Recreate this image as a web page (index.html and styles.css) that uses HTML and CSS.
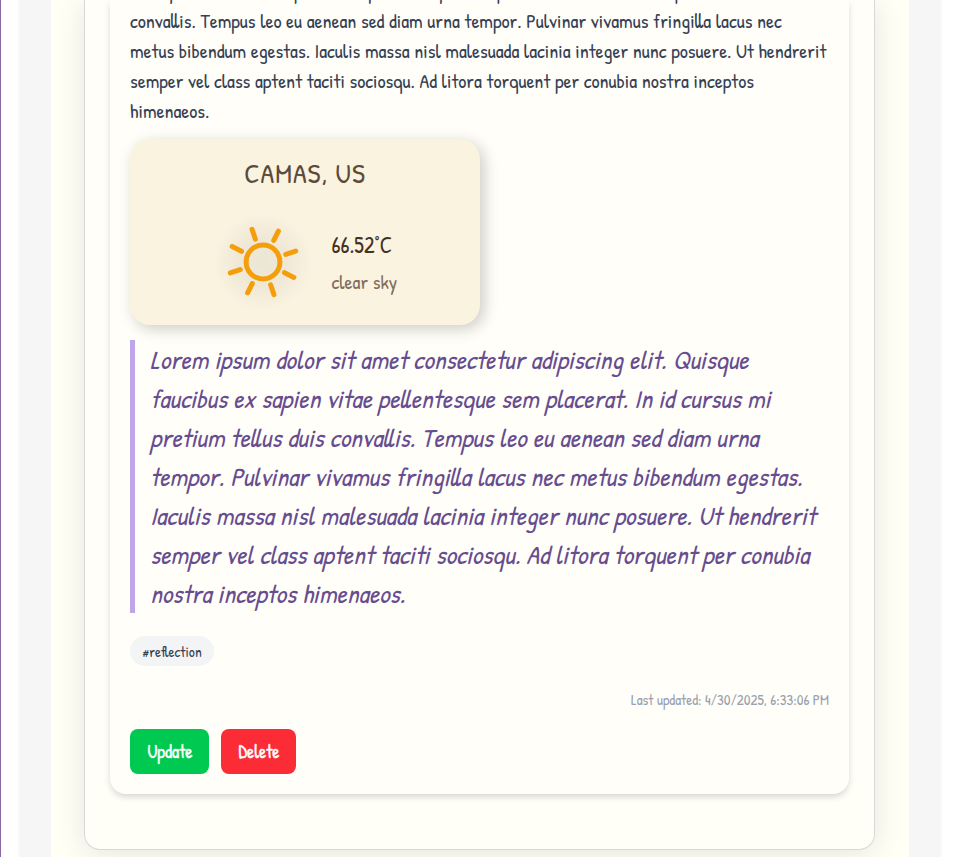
FILE: index.html
```html
<!DOCTYPE html>
<html lang="en">
<head>
<meta charset="utf-8">
<title>Journal</title>
<link rel="stylesheet" href="styles.css">
</head>
<body>
<div class="shell">
  <div class="page">
    <section class="panel">
      <article class="entry">
        <p class="body-text">
          <span class="line">Quisque faucibus ex sapien vitae pellentesque sem placerat. In id cursus mi pretium tellus duis</span>
          <span class="line">convallis. Tempus leo eu aenean sed diam urna tempor. Pulvinar vivamus fringilla lacus nec</span>
          <span class="line">metus bibendum egestas. Iaculis massa nisl malesuada lacinia integer nunc posuere. Ut hendrerit</span>
          <span class="line">semper vel class aptent taciti sociosqu. Ad litora torquent per conubia nostra inceptos</span>
          <span class="line">himenaeos.</span>
        </p>
        <div class="weather">
          <h2 class="city">CAMAS, US</h2>
          <div class="conditions">
            <div class="sun">
              <svg viewBox="0 0 100 100" width="100" height="100" fill="none" stroke="#f59e0b" stroke-width="5" stroke-linecap="round">
                <circle cx="50" cy="50" r="16.900"/>
                <g transform="rotate(-18.500 50 50)">
                  <path d="M50 26V15.500M50 74V84.500M26 50H15.500M74 50H84.500M33 33L25.600 25.600M67 67L74.400 74.400M33 67L25.600 74.400M67 33L74.400 25.600"/>
                </g>
              </svg>
            </div>
            <div class="reading">
              <span class="temp">66.52°C</span>
              <span class="sky">clear sky</span>
            </div>
          </div>
        </div>
        <blockquote class="quote">
          <span class="line">Lorem ipsum dolor sit amet consectetur adipiscing elit. Quisque</span>
          <span class="line">faucibus ex sapien vitae pellentesque sem placerat. In id cursus mi</span>
          <span class="line">pretium tellus duis convallis. Tempus leo eu aenean sed diam urna</span>
          <span class="line">tempor. Pulvinar vivamus fringilla lacus nec metus bibendum egestas.</span>
          <span class="line">Iaculis massa nisl malesuada lacinia integer nunc posuere. Ut hendrerit</span>
          <span class="line">semper vel class aptent taciti sociosqu. Ad litora torquent per conubia</span>
          <span class="line">nostra inceptos himenaeos.</span>
        </blockquote>
        <span class="tag">#reflection</span>
        <p class="updated">Last updated: 4/30/2025, 6:33:06 PM</p>
        <div class="actions">
          <button class="btn update">Update</button>
          <button class="btn delete">Delete</button>
        </div>
      </article>
    </section>
  </div>
</div>
</body>
</html>
```
FILE: styles.css
```css
* { box-sizing: border-box; margin: 0; padding: 0; }
html { overflow: hidden; }
body {
  height: 857px;
  overflow: hidden;
  background: #fff;
  border-left: 1px solid #8768a5;
  font-family: "Patrick Hand", "Open Sans", sans-serif;
}
.shell {
  width: 922px;
  height: 857px;
  margin-left: 18px;
  padding: 0 32px;
  background: #f6f6f7;
  box-shadow: 0 0 5px rgba(0, 0, 0, 0.04);
}
.page {
  height: 857px;
  overflow: hidden;
  padding: 0 34px 0 33px;
  background: #fffff5;
}
.panel {
  height: 850px;
  padding: 0 25px;
  border: 1px solid #d9d9dc;
  border-top: 0;
  border-radius: 0 0 16px 16px;
  background: #fffff7;
  box-shadow: 0 4px 30px rgba(0, 0, 0, 0.1);
}
/* The entry is scrolled to its end: content is anchored to the bottom. */
.entry {
  display: flex;
  flex-direction: column;
  justify-content: flex-end;
  height: 794px;
  width: 739px;
  padding: 0 20px 20px;
  border-radius: 0 0 16px 16px;
  background: #fffef9;
  box-shadow: 0 4px 6px -1px rgba(0, 0, 0, 0.1), 0 2px 8px rgba(0, 0, 0, 0.07);
}
.entry > * { flex-shrink: 0; }
.line { display: block; white-space: nowrap; }
.body-text {
  font-size: 20px;
  line-height: 30px;
  font-weight: 500;
  color: #364153;
}
.weather {
  width: 350px;
  height: 186px;
  margin-top: 13px;
  padding-top: 14px;
  border-radius: 20px;
  background: #faf3e0;
  box-shadow: 4px 4px 15px rgba(0, 0, 0, 0.2);
}
.city {
  font-size: 28px;
  line-height: 40px;
  font-weight: 400;
  letter-spacing: 1px;
  text-align: center;
  color: #5c4b3b;
}
.conditions { display: flex; align-items: center; margin-top: 19px; }
.sun {
  width: 100px;
  height: 100px;
  margin-left: 83px;
  background: radial-gradient(circle, rgba(0, 0, 0, 0.055) 0, rgba(0, 0, 0, 0.045) 35%, rgba(0, 0, 0, 0.015) 58%, transparent 70%);
}
.sun svg { display: block; }
.reading { display: flex; flex-direction: column; margin: 1px 0 0 18.5px; }
.temp { font-size: 22.6px; line-height: 37px; color: #45321e; }
.sky { font-size: 20px; line-height: 37px; color: #806e5b; }
.quote {
  height: 273px;
  margin-top: 15px;
  padding-left: 15px;
  border-left: 5px solid #c0a5e8;
  font-size: 26px;
  line-height: 39px;
  font-style: italic;
  color: #674d8f;
}
.tag {
  width: 84px;
  height: 30px;
  margin-top: 23px;
  border-radius: 15px;
  background: #f3f4f6;
  font-size: 15px;
  line-height: 31px;
  text-align: center;
  color: #364153;
}
.updated {
  margin-top: 24px;
  font-size: 15px;
  line-height: 20px;
  text-align: right;
  color: #99a1af;
}
.actions { display: flex; gap: 12px; margin-top: 19px; }
.btn {
  height: 45px;
  border: 0;
  border-radius: 8px;
  padding-left: 1px;
  font: inherit;
  font-size: 18px;
  font-weight: 500;
  -webkit-text-stroke: 0.4px #fff;
  color: #fff;
}
.update { width: 79px; background: #00c951; }
.delete { width: 75px; background: #fb2c36; }
```
